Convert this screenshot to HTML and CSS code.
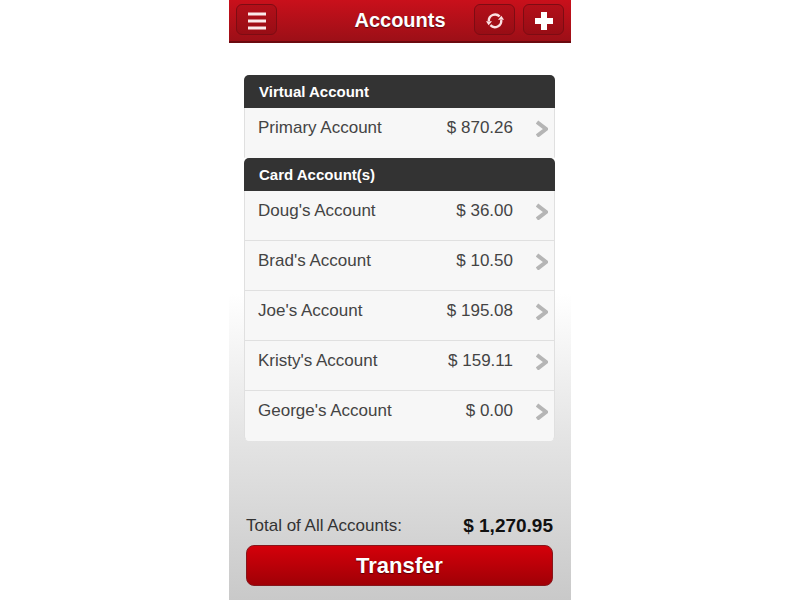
FILE: index.html
```html
<!DOCTYPE html>
<html lang="en">
<head>
  <meta charset="UTF-8" />
  <meta name="viewport" content="width=device-width, initial-scale=1">
  <title>Accounts</title>
  <link rel="stylesheet" href="styles.css">
</head>
<body>
  <div class="screen">
    <header class="topbar">
      <button class="icon-btn" aria-label="Menu">
        <svg width="20" height="20" viewBox="0 0 20 20"><path d="M1 4h18M1 11h18M1 18h18" stroke="#fbe9ea" stroke-width="3" fill="none"/></svg>
      </button>
      <h1>Accounts</h1>
      <div class="actions">
        <button class="icon-btn" aria-label="Refresh">
          <svg width="20" height="20" viewBox="0 0 20 20">
            <path d="M3.8 11A6.3 6.3 0 0 1 14.6 6.4M16.2 10A6.3 6.3 0 0 1 5.4 15.2" stroke="#fbe0e1" stroke-width="2.4" fill="none"/>
            <path d="M13 9.8h6l-2.6-4zM7 11.2H1l2.6 4z" fill="#fbe0e1"/>
          </svg>
        </button>
        <button class="icon-btn" aria-label="Add">
          <svg width="20" height="20" viewBox="0 0 20 20"><path d="M10 2v18M1 11h18" stroke="#fff" stroke-width="6" fill="none"/></svg>
        </button>
      </div>
    </header>

    <main class="content">
      <section class="group">
        <h2>Virtual Account</h2>
        <a class="row" href="#primary">
          <span class="name">Primary Account</span>
          <span class="amount">$ 870.26</span>
          <svg class="arrow" width="12" height="18" viewBox="0 0 12 18"><path d="M1 3l9 7-9 7"/></svg>
        </a>
      </section>

      <section class="group">
        <h2>Card Account(s)</h2>
        <a class="row" href="#doug">
          <span class="name">Doug's Account</span>
          <span class="amount">$ 36.00</span>
          <svg class="arrow" width="12" height="18" viewBox="0 0 12 18"><path d="M1 3l9 7-9 7"/></svg>
        </a>
        <a class="row" href="#brad">
          <span class="name">Brad's Account</span>
          <span class="amount">$ 10.50</span>
          <svg class="arrow" width="12" height="18" viewBox="0 0 12 18"><path d="M1 3l9 7-9 7"/></svg>
        </a>
        <a class="row" href="#joe">
          <span class="name">Joe's Account</span>
          <span class="amount">$ 195.08</span>
          <svg class="arrow" width="12" height="18" viewBox="0 0 12 18"><path d="M1 3l9 7-9 7"/></svg>
        </a>
        <a class="row" href="#kristy">
          <span class="name">Kristy's Account</span>
          <span class="amount">$ 159.11</span>
          <svg class="arrow" width="12" height="18" viewBox="0 0 12 18"><path d="M1 3l9 7-9 7"/></svg>
        </a>
        <a class="row" href="#george">
          <span class="name">George's Account</span>
          <span class="amount">$ 0.00</span>
          <svg class="arrow" width="12" height="18" viewBox="0 0 12 18"><path d="M1 3l9 7-9 7"/></svg>
        </a>
      </section>
    </main>

    <footer class="summary">
      <p class="total">
        <span>Total of All Accounts:</span>
        <strong>$ 1,270.95</strong>
      </p>
      <button class="transfer">Transfer</button>
    </footer>
  </div>
</body>
</html>
```
FILE: styles.css
```css
* { box-sizing: border-box; }

body {
  margin: 0;
  background: #fff;
  font-family: "Liberation Sans", Arial, sans-serif;
}

.screen {
  display: flex;
  flex-direction: column;
  max-width: 342px;
  min-height: 100vh;
  margin: 0 auto;
  background: linear-gradient(#fff 0%, #fff 49%, #e4e4e4 73%, #c9c9c9 100%);
}

/* Top bar */
.topbar {
  display: grid;
  grid-template-columns: 1fr auto 1fr;
  align-items: center;
  padding: 4px 7px 6px;
  background: linear-gradient(#c9101b, #9c0f17);
  border-bottom: 2px solid #6b0a10;
}

.topbar h1 {
  margin: 0;
  color: #fff;
  font-size: 20px;
  line-height: 28px;
  text-shadow: 0 1px 1px rgba(0,0,0,0.5);
}

.actions {
  display: flex;
  justify-content: flex-end;
  gap: 8px;
}

.icon-btn {
  display: flex;
  align-items: center;
  justify-content: center;
  width: 41px;
  height: 31px;
  padding: 0;
  background: linear-gradient(#b30f19, #980d15);
  border: 1px solid #7d0c13;
  border-radius: 6px;
  cursor: pointer;
}

/* Account lists */
.content {
  flex: 1;
  padding: 32px 16px 0 15px;
}

.group h2 {
  margin: 0;
  padding: 0 15px;
  background: #333;
  border-radius: 5px 5px 0 0;
  color: #fff;
  font-size: 15px;
  line-height: 33px;
}

.row {
  display: flex;
  align-items: center;
  height: 50px;
  padding: 0 6px 9px 13px;
  background: #f7f7f7;
  border: 1px solid #e0e0e0;
  border-width: 0 1px 1px;
  color: #444;
  font-size: 17px;
  text-decoration: none;
}

.row:last-child {
  border-bottom-color: #f7f7f7;
}

.group:last-child .row:last-child {
  border-radius: 0 0 5px 5px;
}

.amount {
  margin-left: auto;
}

.arrow {
  margin-left: 23px;
  fill: none;
  stroke: #b5b5b5;
  stroke-width: 4;
}

/* Total and transfer */
.summary {
  padding: 0 18px 14px 17px;
}

.total {
  display: flex;
  justify-content: space-between;
  align-items: center;
  margin: 0 0 8px;
  color: #333;
  font-size: 17px;
  line-height: 22px;
}

.total strong {
  color: #111;
  font-size: 19px;
}

.transfer {
  width: 100%;
  height: 41px;
  background: linear-gradient(#d4000a, #a00006);
  border: 1px solid #86161b;
  border-radius: 8px;
  color: #fff;
  font-family: inherit;
  font-size: 22px;
  font-weight: bold;
  text-shadow: 0 1px 1px rgba(0,0,0,0.5);
  cursor: pointer;
}
```
